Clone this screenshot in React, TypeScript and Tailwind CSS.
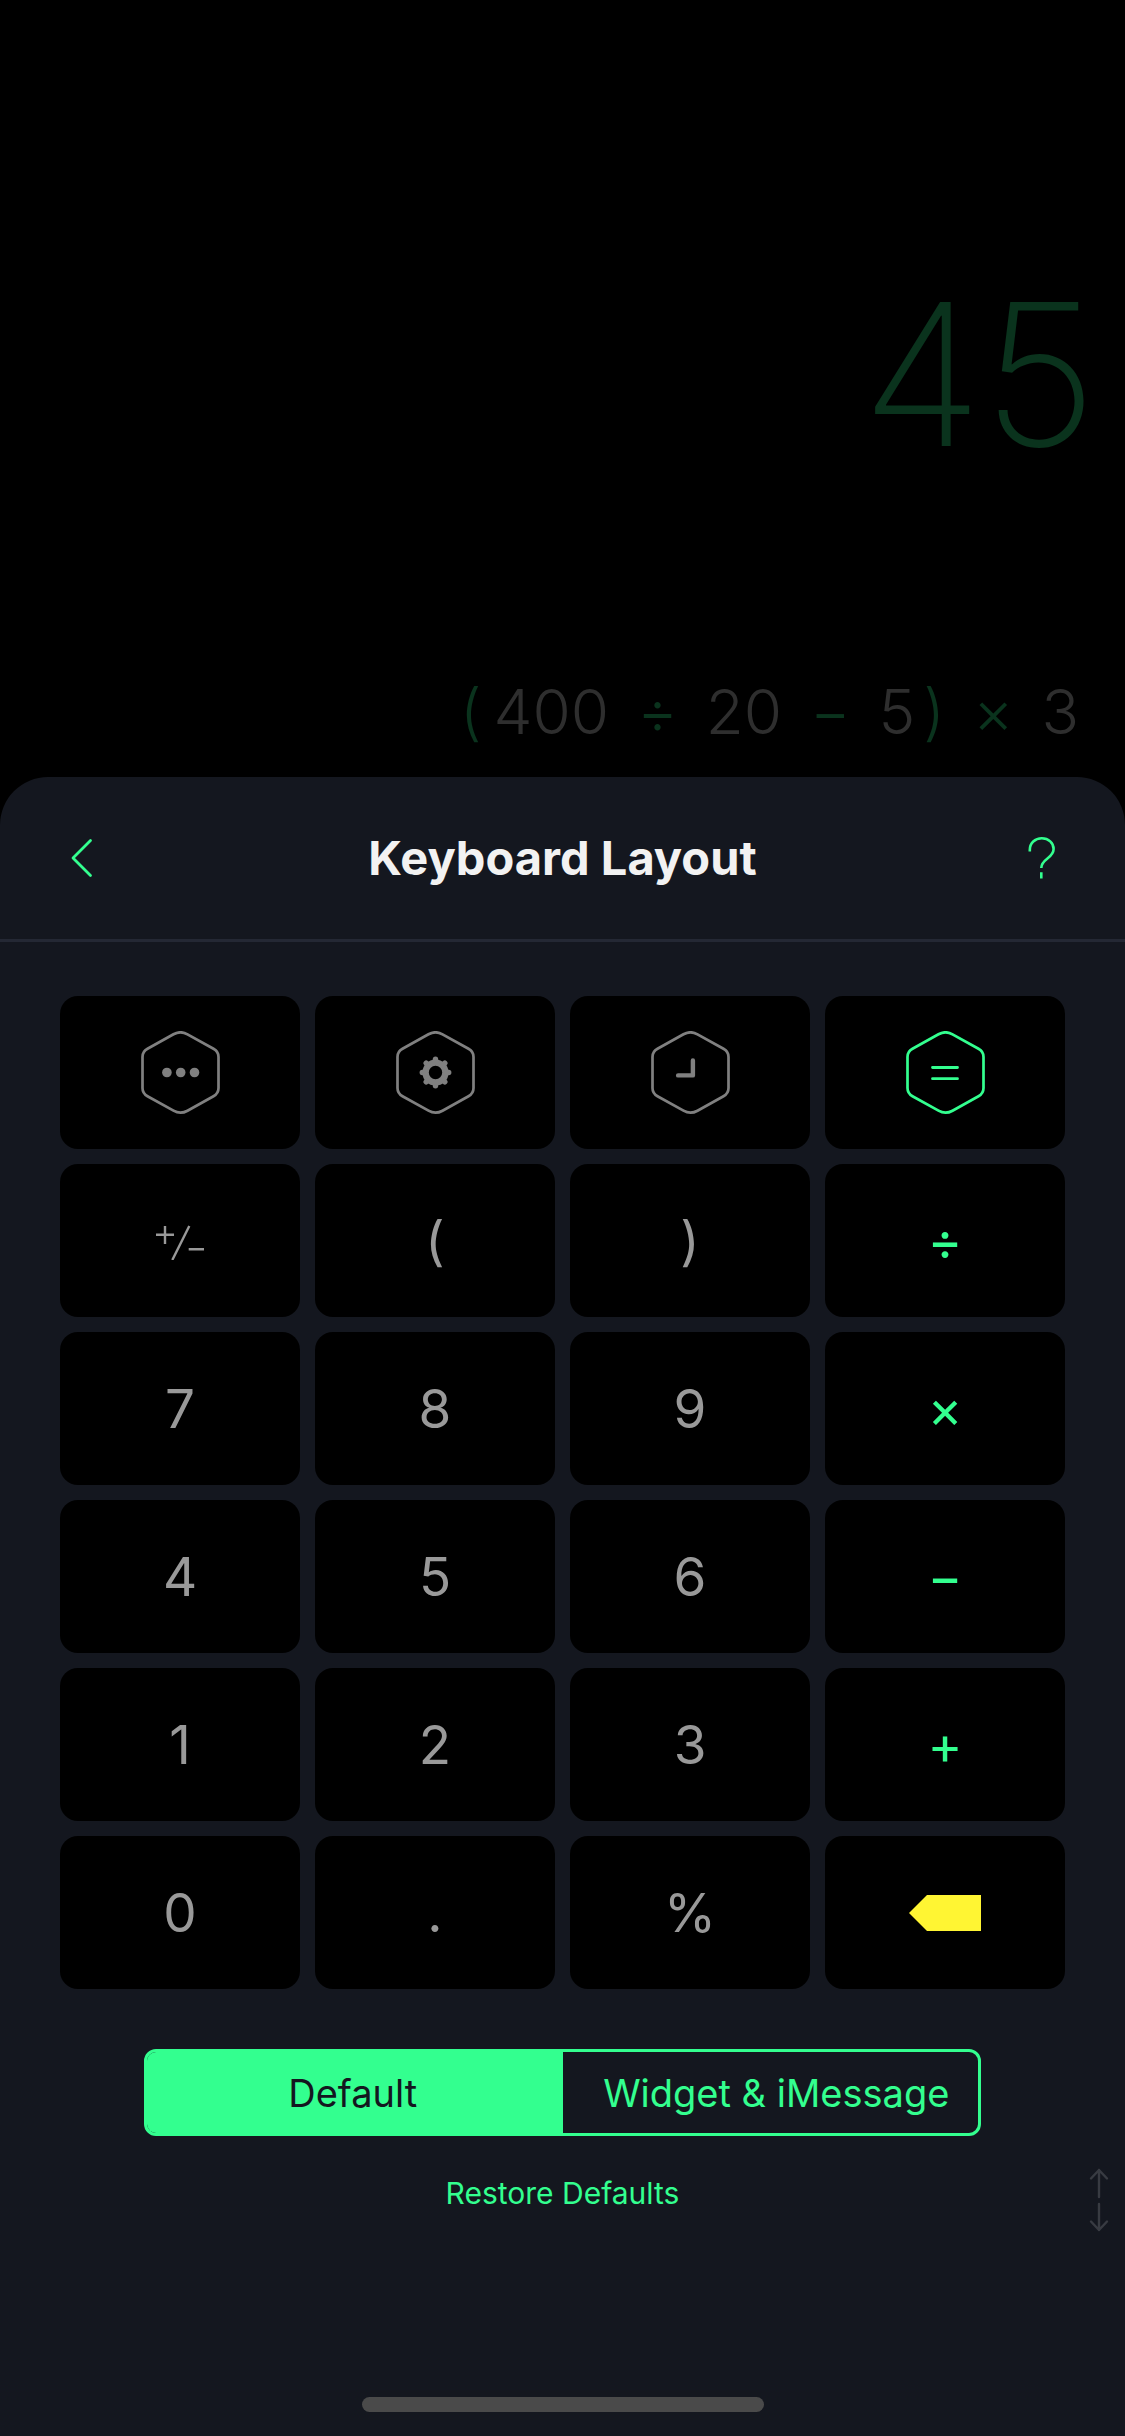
// ============================================================
// App.tsx
// Calculator display with the keyboard layout settings sheet.
// ============================================================

import { useState } from 'react'
import type { ReactNode } from 'react'

interface KeyItem {
  label: string
  content: ReactNode
  tone?: string
}

// ── Icons ────────────────────────────────────────────────────

function HexIcon({ children }: { children: ReactNode }) {
  return (
    <svg className="w-20 h-[84px]" viewBox="-40.5 -41.5 80 84" fill="none" stroke="currentColor">
      <path
        strokeWidth={2.7}
        d="M-38 -15.5Q-38 -21 -33 -23.7L-7 -38.2Q0 -42.2 7 -38.2L33 -23.7Q38 -21 38 -15.5V15.5Q38 21 33 23.7L7 38.2Q0 42.2 -7 38.2L-33 23.7Q-38 21 -38 15.5Z"
      />
      {children}
    </svg>
  )
}

function GearShape() {
  return (
    <g>
      <circle r="9.9" strokeWidth={6.4} />
      {[0, 45, 90, 135, 180, 225, 270, 315].map(deg => (
        <path key={deg} d="M0 -11V-13.2" strokeWidth={5.4} strokeLinecap="round" transform={`rotate(${deg})`} />
      ))}
    </g>
  )
}

function PlusMinusIcon() {
  return (
    <svg className="w-12 h-[38px]" viewBox="0 -4 48 38" fill="none" stroke="currentColor" strokeWidth={2.4}>
      <path d="M0 8.7H18M9 0V18M16.3 34L33.3 0M32.7 23.3H48" />
    </svg>
  )
}

function BackspaceIcon() {
  return (
    <svg className="w-[72px] h-9" viewBox="0 0 72 36" fill="currentColor">
      <path d="M0 18L18 0H72V36H18Z" />
    </svg>
  )
}

// ── Keys ─────────────────────────────────────────────────────

const ICON = 'text-[#808080]'
const DIGIT = 'text-[#999999]'
const GREEN = 'text-[#33ff8f]'

const keys: KeyItem[] = [
  {
    label: 'More',
    tone: ICON,
    content: (
      <HexIcon>
        <g fill="currentColor" stroke="none">
          <circle cx="-13.6" r="4.8" />
          <circle cx="0.2" r="4.8" />
          <circle cx="14" r="4.8" />
        </g>
      </HexIcon>
    ),
  },
  { label: 'Settings', tone: ICON, content: <HexIcon><GearShape /></HexIcon> },
  {
    label: 'History',
    tone: ICON,
    content: <HexIcon><path d="M2.4 -12V2.9H-12.4" strokeWidth={4.4} strokeLinecap="round" strokeLinejoin="round" /></HexIcon>,
  },
  {
    label: 'Equals',
    tone: GREEN,
    content: <HexIcon><path d="M-13 -5H12M-13 6.2H12" strokeWidth={2.8} strokeLinecap="round" /></HexIcon>,
  },
  { label: 'Plus minus', content: <PlusMinusIcon /> },
  { label: 'Open bracket', content: '(' },
  { label: 'Close bracket', content: ')' },
  { label: 'Divide', tone: GREEN, content: '÷' },
  { label: '7', content: '7' },
  { label: '8', content: '8' },
  { label: '9', content: '9' },
  { label: 'Multiply', tone: GREEN, content: '×' },
  { label: '4', content: '4' },
  { label: '5', content: '5' },
  { label: '6', content: '6' },
  { label: 'Subtract', tone: GREEN, content: '−' },
  { label: '1', content: '1' },
  { label: '2', content: '2' },
  { label: '3', content: '3' },
  { label: 'Add', tone: GREEN, content: '+' },
  { label: '0', content: '0' },
  { label: 'Decimal point', content: '.' },
  { label: 'Percent', content: '%' },
  { label: 'Delete', tone: 'text-[#fff533]', content: <BackspaceIcon /> },
]

const tabs = [
  { name: 'Default', pad: 'pr-1' },
  { name: 'Widget & iMessage', pad: 'pl-3' },
]

export default function App() {
  const [tab, setTab] = useState('Default')

  return (
    <div className="min-h-screen flex flex-col bg-black font-['Inter',sans-serif]">

      {/* ── Display ──────────────────────────────────────── */}
      <div className="flex flex-col items-end pt-[274px] pb-[29px] gap-[202px]">
        <div className="pr-7 text-[198px] leading-[200px] font-extralight text-[#0a331d]">45</div>
        <div className="flex pr-[46px] text-[62px] leading-[72px] font-light text-[#2e2e2e]">
          <span className="pr-3 text-[#0a331d]">(</span>
          <span>400</span>
          <span className="px-7 text-[#0a331d]">÷</span>
          <span>20</span>
          <span className="px-7 text-[#0a331d]">−</span>
          <span>5</span>
          <span className="pl-2 text-[#0a331d]">)</span>
          <span className="px-7 text-[#0a331d]">×</span>
          <span>3</span>
        </div>
      </div>

      {/* ── Sheet ────────────────────────────────────────── */}
      <div className="flex-1 flex flex-col rounded-t-[48px] bg-[#14171f]">
        <header className="flex items-center justify-between h-[165px] px-[66px] border-b-[3px] border-[#242834]">
          <button type="button" aria-label="Back" className="w-8 text-[#33ff8f]">
            <svg className="w-8 h-10" viewBox="0 0 32 40" fill="none" stroke="currentColor">
              <path strokeWidth={2.8} strokeLinecap="round" strokeLinejoin="round" d="M24.5 2.5L7 20L24.5 37.5" />
            </svg>
          </button>
          <h1 className="text-[47px] leading-[56px] font-bold text-[#f2f2f2]">Keyboard Layout</h1>
          <button type="button" aria-label="Help" className="w-8 text-[#33ff8f]">
            <svg className="w-8 h-[42px]" viewBox="0 0 32 42" fill="none" stroke="currentColor">
              <path strokeWidth={2.6} d="M2.8 14.5V13C2.8 6 8 1.3 14.8 1.3S26.6 6 26.6 12C26.6 21.5 14.3 21.5 14.3 31M14.3 35.3V41.5" />
            </svg>
          </button>
        </header>

        <div className="grid grid-cols-4 gap-[15px] px-[60px] pt-[54px]">
          {keys.map(k => (
            <button
              key={k.label}
              type="button"
              aria-label={k.label}
              className={`flex items-center justify-center h-[153px] rounded-[18px] bg-black text-[53px] leading-[64px] ${k.tone ?? DIGIT}`}
            >
              {k.content}
            </button>
          ))}
        </div>

        {/* ── Layout switch ──────────────────────────────── */}
        <div className="grid grid-cols-2 h-[87px] mx-36 mt-[60px] rounded-xl border-[3px] border-[#33ff8f] overflow-hidden">
          {tabs.map(t => (
            <button
              key={t.name}
              type="button"
              aria-pressed={t.name === tab}
              onClick={() => setTab(t.name)}
              className={`text-[38px] leading-[48px] ${t.pad} ${t.name === tab ? 'bg-[#33ff8f] text-[#14171f]' : 'text-[#33ff8f]'}`}
            >
              {t.name}
            </button>
          ))}
        </div>

        <div className="grid grid-cols-[1fr_auto_1fr] items-start mt-8 px-4">
          <button type="button" className="col-start-2 text-[30px] leading-[50px] text-[#33ff8f]">
            Restore Defaults
          </button>
          <svg className="justify-self-end w-5 h-16 text-[#383b42]" viewBox="0 0 20 64" fill="none" stroke="currentColor" strokeWidth={2.4}>
            <path strokeLinecap="round" strokeLinejoin="round" d="M2 10.5L10 2L18 10.5M10 2V29M2 53.5L10 62L18 53.5M10 62V36" />
          </svg>
        </div>

        <div className="w-[402px] h-[15px] mt-auto mb-6 mx-auto rounded-full bg-[#4a4a4a]" />
      </div>
    </div>
  )
}
